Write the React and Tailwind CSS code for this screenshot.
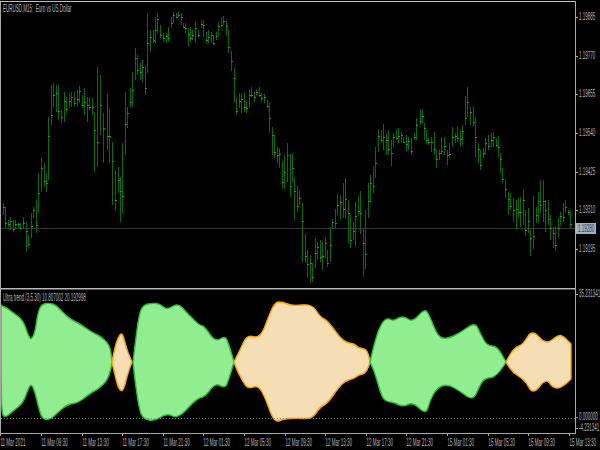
const bars = [
  [3,203,215],[5,207,228],[8,220,227],[10,217,230],[13,220,232],[15,220,228],[18,222,228],[20,223,229],[23,217,229],[26,222,252],
  [28,235,247],[31,213,238],[33,207,218],[36,200,233],[38,173,213],[41,158,192],[44,163,187],[46,173,192],[48,117,180],[51,85,125],
  [53,83,107],[56,85,112],[58,85,120],[61,110,123],[64,92,122],[66,97,113],[69,93,108],[71,92,107],[74,92,107],[77,90,107],
  [79,86,103],[82,95,108],[84,88,115],[87,97,122],[89,97,110],[92,98,115],[94,112,172],[97,67,167],[100,75,135],[103,113,163],
  [107,94,150],[109,109,163],[112,142,205],[115,170,210],[118,167,193],[120,177,222],[122,143,213],[125,92,155],[127,107,128],[130,88,107],
  [132,72,107],[135,48,80],[137,55,75],[140,63,80],[142,60,82],[145,65,95],[147,13,73],[150,30,52],[153,30,43],[155,17,43],
  [157,13,33],[160,25,38],[163,33,42],[166,33,43],[168,27,42],[171,17,28],[173,12,23],[176,13,18],[178,12,17],[181,13,25],
  [183,23,28],[185,23,33],[188,28,47],[190,27,42],[192,30,40],[195,22,43],[198,30,37],[201,20,28],[203,20,37],[206,32,43],
  [208,30,43],[211,32,43],[213,35,45],[216,32,40],[218,22,36],[221,17,27],[223,16,25],[226,21,36],[228,30,53],[231,51,71],
  [234,68,102],[236,98,115],[239,93,108],[241,93,113],[244,92,112],[246,102,113],[249,90,108],[251,87,97],[254,92,102],[256,90,95],
  [259,87,97],[261,93,102],[264,94,103],[267,100,108],[269,102,133],[272,127,155],[274,135,158],[277,147,163],[279,148,168],[282,162,188],
  [284,155,189],[287,143,182],[290,154,197],[292,154,182],[294,178,220],[297,186,212],[299,190,205],[302,203,262],[305,233,263],[307,250,278],
  [310,255,283],[312,263,282],[315,238,268],[317,242,260],[320,240,262],[322,242,270],[325,237,258],[327,250,267],[330,227,262],[332,219,229],
  [335,209,228],[337,194,215],[340,195,219],[343,183,218],[345,178,219],[348,200,243],[350,215,248],[353,222,240],[355,202,247],[358,197,215],
  [360,191,234],[363,228,277],[365,210,269],[368,183,218],[370,175,203],[373,166,193],[375,147,178],[378,129,152],[381,130,143],[383,124,150],
  [386,133,155],[388,130,155],[391,140,166],[393,133,147],[396,130,140],[398,128,143],[401,132,143],[403,137,143],[406,135,152],[408,137,150],
  [411,138,155],[414,133,140],[416,118,140],[420,109,125],[422,109,123],[424,123,140],[426,130,143],[428,138,145],[431,137,152],[434,132,155],
  [436,150,168],[439,150,160],[441,137,155],[444,137,155],[447,150,165],[449,143,158],[452,127,147],[455,133,143],[457,126,142],[460,130,147],
  [462,125,145],[465,96,125],[467,87,117],[470,107,125],[473,107,127],[475,117,157],[478,143,163],[480,150,170],[483,148,158],[485,138,155],
  [488,135,150],[491,133,147],[493,132,147],[496,138,147],[498,136,157],[500,153,173],[502,168,183],[505,179,198],[508,192,215],[510,193,210],
  [513,198,222],[516,200,230],[518,198,217],[520,197,227],[523,189,225],[525,210,236],[528,208,233],[530,230,256],[533,196,249],[536,207,223],
  [538,192,222],[540,180,213],[543,180,222],[545,200,232],[548,200,225],[550,215,240],[553,227,248],[555,226,251],[558,218,237],[560,212,225],
  [563,203,222],[565,200,213],[568,210,215],[570,210,228],
]

const bands = [
  { up: true, points: '1,305 2,306 7,308 12,312 23,320 28,335 31,340 35,333 38,312 42,304 50,303 57,306 68,318 80,324 93,333 100,336 110,345 112,362 110,378 97,390 92,392 78,403 68,404 57,413 50,420 42,419 38,405 35,392 31,383 27,392 23,403 13,411 5,418 1,412' },
  { up: false, points: '112,362 115,347 118,338 122,332 125,343 128,353 132,362 128,372 125,385 122,392 118,387 115,375' },
  { up: true, points: '133,362 135,345 139,315 143,305 153,303 160,304 167,310 178,303 187,313 197,323 200,325 205,327 215,342 225,336 228,342 234,362 228,382 225,388 215,383 205,397 197,398 178,419 167,413 155,421 143,419 139,408 135,380' },
  { up: false, points: '234,362 240,350 247,335 257,338 263,332 268,318 275,302 283,302 292,306 312,304 320,317 328,321 343,342 355,344 358,348 367,349 370,362 367,373 358,375 355,378 342,382 328,403 320,407 312,419 297,418 283,419 277,422 272,417 265,397 258,385 248,389 242,380 237,370' },
  { up: true, points: '370,362 375,340 382,322 388,318 393,321 400,317 405,317 413,322 425,308 430,317 438,337 447,339 460,333 475,322 480,333 487,346 497,346 506,362 497,377 485,378 480,385 473,401 460,391 447,384 437,388 430,400 426,415 413,402 403,407 393,402 388,402 382,398 375,373' },
  { up: false, points: '506,362 513,348 523,345 532,329 546,345 558,335 563,336 571,344 571,379 562,388 553,388 546,378 533,395 525,380 513,373' },
]

// rounds every vertex except the pinch points where two bands meet
function smoothPath(points) {
  const pts = points.split(' ').map((p) => p.split(',').map(Number))
  const maxX = Math.max(...pts.map((p) => p[0]))
  let d = `M${pts[0][0]} ${pts[0][1]}`
  for (let i = 1; i < pts.length; i++) {
    const [x, y] = pts[i]
    const [nx, ny] = pts[(i + 1) % pts.length]
    if (x === maxX) d += ` L${x} ${y}`
    else d += ` Q${x} ${y} ${(x + nx) / 2} ${(y + ny) / 2}`
  }
  return d + ' Z'
}

const prices = ['1.19885', '1.19770', '1.19655', '1.19540', '1.19425', '1.19310', '1.19195']
const times = ['11 Mar 2021', '11 Mar 09:30', '11 Mar 13:30', '11 Mar 17:30', '11 Mar 21:30', '12 Mar 01:30', '12 Mar 05:30', '12 Mar 09:30', '12 Mar 13:30', '12 Mar 17:30', '12 Mar 21:30', '15 Mar 01:30', '15 Mar 05:30', '15 Mar 09:30', '15 Mar 13:30']

const labelFont = "font-['Liberation_Sans',sans-serif] text-[10px] leading-[10px] text-[#b4b4b4] whitespace-nowrap origin-left scale-x-[0.45]"

export default function App() {
  return (
    <div className="w-[600px] h-[450px] bg-black overflow-hidden flex flex-col pt-px">
      <div className="flex h-[432px]">
        <div className="w-[576px] flex flex-col border-l border-r border-[#a8a8a8]">
          {/* price chart */}
          <div className="relative h-[287px] border-t border-[#c0c0c0]">
            <svg width="574" height="286" viewBox="1 2 574 286" className="block">
              <line x1="1" y1="228.5" x2="575" y2="228.5" stroke="#363636" />
              {bars.map(([x, high, low], i) => {
                const close = Math.round(high + (low - high) * (i % 3 === 0 ? 0.3 : i % 3 === 1 ? 0.75 : 0.5))
                return (
                  <g key={x}>
                    <line x1={x + 0.5} y1={high} x2={x + 0.5} y2={low} stroke="#086c08" />
                    <rect x={x} y={close} width="2" height="1" fill="#0fa80f" />
                  </g>
                )
              })}
            </svg>
            <span className={`absolute left-[2px] top-[2px] ${labelFont}`}>EURUSD,M15:&nbsp; Euro vs US Dollar</span>
          </div>
          <div className="h-[2px] bg-[#b8b8b8] border-b border-[#555]" />
          {/* ultra trend sub window */}
          <div className="relative flex-1">
            <svg width="574" height="143" viewBox="1 290 574 143" className="block">
              {bands.map((b) => (
                <path
                  key={b.points}
                  d={smoothPath(b.points)}
                  fill={b.up ? '#90ee90' : '#f5deb3'}
                  stroke={b.up ? '#2cc22c' : '#ffa500'}
                  strokeWidth="1.4"
                  strokeLinejoin="round"
                />
              ))}
              <line x1="1" y1="418.5" x2="575" y2="418.5" stroke="#8a8a8a" strokeDasharray="1 2" />
            </svg>
            <span className={`absolute left-[2px] top-[3px] ${labelFont}`}>Ultra trend (3,5,30) 10.807002 20.192998</span>
          </div>
        </div>

        {/* right axis */}
        <div className="relative flex-1 flex flex-col">
          <div className="flex flex-col pt-[11px] h-[287px]">
            {prices.map((p) => (
              <div key={p} className="h-[38.67px] flex items-start">
                <span className="w-[2px] h-px bg-[#a8a8a8] mt-[5px]" />
                <span className={`ml-[1px] ${labelFont}`}>{p}</span>
              </div>
            ))}
          </div>
          <span className="absolute left-0 top-[222px] w-[20px] h-[11px] bg-[#9fb2c6] flex items-center pl-[2px]">
            <span className="font-['Liberation_Sans',sans-serif] text-[10px] leading-[10px] text-[#2f3a44] origin-left scale-x-[0.45] whitespace-nowrap">1.19280</span>
          </span>
          <div className="flex-1 flex flex-col pt-[1px]">
            <div className="flex items-start">
              <span className="w-[2px] h-px bg-[#a8a8a8] mt-[5px]" />
              <span className={`ml-[1px] ${labelFont}`}>35.231341</span>
            </div>
            <div className="flex items-start mt-[113px]">
              <span className="w-[2px] h-px bg-[#a8a8a8] mt-[5px]" />
              <span className={`ml-[1px] ${labelFont}`}>0.000000</span>
            </div>
            <div className="flex items-start mt-[1px]">
              <span className="w-[2px] h-px bg-[#a8a8a8] mt-[5px]" />
              <span className={`ml-[1px] ${labelFont}`}>-4.231341</span>
            </div>
          </div>
        </div>
      </div>

      {/* time axis */}
      <div className="w-[576px] h-[17px] border-t border-[#a8a8a8] flex">
        {times.map((t, i) => (
          <div key={t} className={`${i === 0 ? 'w-[41px]' : 'w-[40.6px]'} shrink-0 flex flex-col`}>
            <span className="w-px h-[2px] bg-[#a8a8a8]" />
            <span className={`pl-[1px] mt-[2px] ${labelFont}`}>{t}</span>
          </div>
        ))}
      </div>
    </div>
  )
}
